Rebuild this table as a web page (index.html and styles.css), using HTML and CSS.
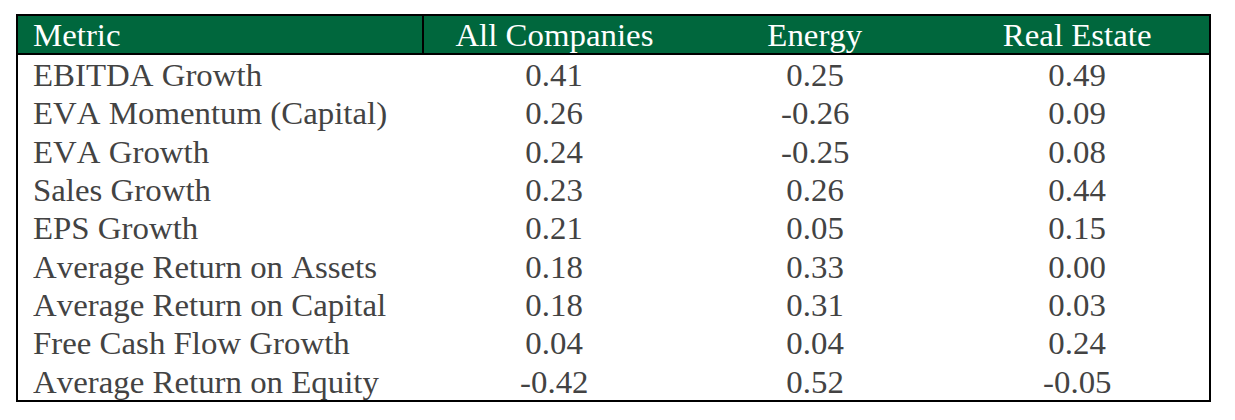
FILE: index.html
```html
<!DOCTYPE html>
<html>
<head>
<meta charset="utf-8">
<link rel="stylesheet" href="styles.css">
</head>
<body>
<div class="table">
  <div class="row head">
    <div class="cell first"><span>Metric</span></div>
    <div class="cell"><span>All Companies</span></div>
    <div class="cell"><span>Energy</span></div>
    <div class="cell"><span>Real Estate</span></div>
  </div>
  <div class="row"><div class="cell first"><span>EBITDA Growth</span></div><div class="cell"><span>0.41</span></div><div class="cell"><span>0.25</span></div><div class="cell"><span>0.49</span></div></div>
  <div class="row"><div class="cell first"><span>EVA Momentum (Capital)</span></div><div class="cell"><span>0.26</span></div><div class="cell"><span>-0.26</span></div><div class="cell"><span>0.09</span></div></div>
  <div class="row"><div class="cell first"><span>EVA Growth</span></div><div class="cell"><span>0.24</span></div><div class="cell"><span>-0.25</span></div><div class="cell"><span>0.08</span></div></div>
  <div class="row"><div class="cell first"><span>Sales Growth</span></div><div class="cell"><span>0.23</span></div><div class="cell"><span>0.26</span></div><div class="cell"><span>0.44</span></div></div>
  <div class="row"><div class="cell first"><span>EPS Growth</span></div><div class="cell"><span>0.21</span></div><div class="cell"><span>0.05</span></div><div class="cell"><span>0.15</span></div></div>
  <div class="row"><div class="cell first"><span>Average Return on Assets</span></div><div class="cell"><span>0.18</span></div><div class="cell"><span>0.33</span></div><div class="cell"><span>0.00</span></div></div>
  <div class="row"><div class="cell first"><span>Average Return on Capital</span></div><div class="cell"><span>0.18</span></div><div class="cell"><span>0.31</span></div><div class="cell"><span>0.03</span></div></div>
  <div class="row"><div class="cell first"><span>Free Cash Flow Growth</span></div><div class="cell"><span>0.04</span></div><div class="cell"><span>0.04</span></div><div class="cell"><span>0.24</span></div></div>
  <div class="row"><div class="cell first"><span>Average Return on Equity</span></div><div class="cell"><span>-0.42</span></div><div class="cell"><span>0.52</span></div><div class="cell"><span>-0.05</span></div></div>
</div>
</body>
</html>
```
FILE: styles.css
```css
html, body {
  margin: 0;
  padding: 0;
  background: #ffffff;
}
body {
  padding: 14px 0 0 16px;
  font-family: "Times New Roman", "Liberation Serif", Tinos, Times, serif;
  font-size: 31px;
  font-kerning: none;
  color: #434343;
}
.table {
  width: 1191px;
  border: 2px solid #000000;
}
.row {
  display: grid;
  grid-template-columns: 406px 260px 262px 263px;
  height: 38.33px;
}
.head {
  height: 37px;
  background: #00673d;
  color: #ffffff;
  border-bottom: 2px solid #000000;
}
.cell {
  text-align: center;
  padding-top: 4px;
  line-height: 34.33px;
  white-space: nowrap;
}
.head .cell {
  padding-top: 2px;
  line-height: 35px;
}
.cell span {
  display: inline-block;
  transform: scaleX(1.06);
  transform-origin: center;
}
.cell.first {
  text-align: left;
  padding-left: 15px;
}
.cell.first span {
  transform-origin: left;
}
.head .cell.first {
  border-right: 2px solid #000000;
}
```
